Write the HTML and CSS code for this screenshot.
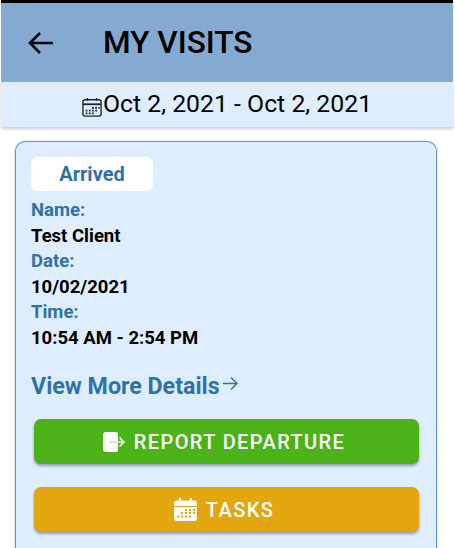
FILE: index.html
```html
<!DOCTYPE html>
<html lang="en">
<head>
  <meta charset="UTF-8" />
  <meta name="viewport" content="width=device-width, initial-scale=1.0"/>
  <title>My Visits</title>
  <link rel="stylesheet" href="styles.css">
</head>
<body>

  <div class="page">
    <header class="app-bar">
      <svg class="back-icon" viewBox="0 0 26 24" width="26" height="24">
        <path d="M25 12H2M12 2 2 12l10 10" fill="none" stroke="#000" stroke-width="2.6"/>
      </svg>
      <h1>MY VISITS</h1>
    </header>

    <div class="date-range">
      <svg class="range-icon" viewBox="0 0 22 22" width="20" height="20">
        <rect x="1" y="3" width="20" height="18" rx="2.5" fill="none" stroke="#1c2430" stroke-width="1.5"/>
        <path d="M1 8h20" stroke="#1c2430" stroke-width="2"/>
        <path d="M6 1v3M16 1v3" stroke="#1c2430" stroke-width="1.5"/>
        <path d="M11 11h2v2h-2zM14.5 11h2v2h-2zM18 11h1.5v2H18zM4 14h2v2H4zM7.500 14h2v2h-2zM11 14h2v2h-2zM14.500 14h2v2h-2zM4 17h2v2H4zM7.500 17h2v2h-2zM11 17h2v2h-2z" fill="#1c2430"/>
      </svg>
      <span>Oct 2, 2021 - Oct 2, 2021</span>
    </div>

    <main class="visits">
      <div class="visit-card">
        <div class="status">Arrived</div>

        <dl class="details">
          <dt>Name:</dt>
          <dd>Test Client</dd>
          <dt>Date:</dt>
          <dd>10/02/2021</dd>
          <dt>Time:</dt>
          <dd>10:54 AM - 2:54 PM</dd>
        </dl>

        <a class="more-link" href="#">
          View More Details
          <svg viewBox="0 0 16 16" width="15" height="15">
            <path d="M0 8h15M8.500 1.500 15 8l-6.500 6.500" fill="none" stroke="#2f72ab" stroke-width="1.600"/>
          </svg>
        </a>

        <button class="action action-depart">
          <svg viewBox="0 0 22 20" width="22" height="20">
            <path d="M3 0h10a2 2 0 0 1 2 2v7H7.500v2H15v7a2 2 0 0 1-2 2H3a3 3 0 0 1-3-3V3a3 3 0 0 1 3-3z" fill="#fff"/>
            <path d="M8 10h12.500M16.500 5.500 21 10l-4.500 4.500" fill="none" stroke="#fff" stroke-width="1.500"/>
          </svg>
          REPORT DEPARTURE
        </button>

        <button class="action action-tasks">
          <svg viewBox="0 0 23 23" width="23" height="23">
            <path d="M5 0h2v2.500h9V0h2v2.500h2a3 3 0 0 1 3 3V8H0V5.500a3 3 0 0 1 3-3h2z" fill="#fff"/>
            <path fill-rule="evenodd" d="M0 9h23v11a3 3 0 0 1-3 3H3a3 3 0 0 1-3-3zM11 11h2v2h-2zM15 11h2v2h-2zM19 11h2v2h-2zM7 14h2v2H7zM11 14h2v2h-2zM15 14h2v2h-2zM19 14h2v2h-2zM3.500 17.500h2v2h-2zM7 17.500h2v2H7zM11 17.500h2v2h-2zM15 17.500h2v2h-2z" fill="#fff"/>
          </svg>
          TASKS
        </button>
      </div>
    </main>
  </div>

</body>
</html>
```

FILE: styles.css
```css
html,
body {
  height: 100%;
  margin: 0;
  overflow: hidden;
}

body {
  font-family: 'Roboto', sans-serif;
  background-color: #ffffff;
  color: #000000;
}

.page {
  display: flex;
  flex-direction: column;
  width: 452px;
  height: 548px;
  margin-left: 1px;
}

.app-bar {
  display: flex;
  align-items: center;
  flex: none;
  height: 79px;
  border-top: 3px solid #000000;
  background-color: #84aad2;
  padding-left: 27px;
}

.app-bar h1 {
  margin: 0 0 0 49px;
  font-size: 31.600px;
  font-weight: 500;
}

.back-icon {
  flex: none;
}

.date-range {
  display: flex;
  align-items: center;
  justify-content: center;
  flex: none;
  gap: 1px;
  height: 45px;
  padding-bottom: 2px;
  box-sizing: border-box;
  background-color: #deeeff;
  box-shadow: 0 2px 3px rgba(0, 0, 0, 0.2);
  font-size: 24.800px;
  position: relative;
}

.range-icon {
  margin-top: 6px;
}

.visits {
  flex: 1;
  display: flex;
  padding: 14px 16px 0 14px;
  min-height: 0;
}

.visit-card {
  flex: 1;
  border: 1px solid #5f94c0;
  border-bottom: none;
  border-radius: 10px 10px 0 0;
  background-color: #deeeff;
  box-shadow: 0 1px 3px rgba(0, 0, 0, 0.25);
  padding: 15px 17px 0 15px;
}

.status {
  width: 122px;
  height: 34px;
  line-height: 34px;
  border-radius: 7px;
  background-color: #ffffff;
  color: #2f72ab;
  font-size: 20px;
  font-weight: 700;
  text-align: center;
}

.details {
  margin: 7px 0 0;
  font-size: 18.500px;
  line-height: 25.500px;
  font-weight: 700;
}

.details dt {
  color: #2f72ab;
}

.details dd {
  margin: 0;
  color: #000000;
}

.more-link {
  display: flex;
  align-items: center;
  gap: 3px;
  margin-top: 19px;
  color: #2f72ab;
  font-size: 23.200px;
  font-weight: 700;
  line-height: 32px;
  text-decoration: none;
}

.more-link svg {
  margin-bottom: 5px;
}

.action {
  display: flex;
  align-items: center;
  justify-content: center;
  gap: 9px;
  width: 385px;
  height: 45px;
  margin-left: 3px;
  padding: 0 5px 0 0;
  border: none;
  border-radius: 7px;
  box-shadow: 0 2px 3px rgba(0, 0, 0, 0.35);
  color: #ffffff;
  font-family: inherit;
  font-size: 20px;
  font-weight: 500;
  letter-spacing: 1.400px;
}

.action-depart {
  margin-top: 17px;
  background-color: #4bb318;
}

.action-tasks {
  margin-top: 23px;
  background-color: #e3a60f;
}
```
